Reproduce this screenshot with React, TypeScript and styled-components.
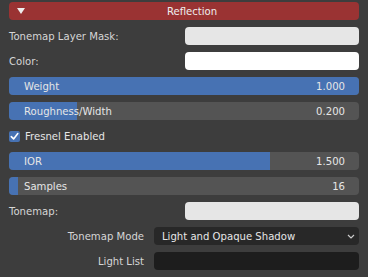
import styled, { createGlobalStyle } from "styled-components";

const GlobalStyle = createGlobalStyle`
    html, body {
        margin: 0;
        padding: 0;
        background: #3d3d3d;
        font-family: "DejaVu Sans", "Liberation Sans", sans-serif;
        font-size: 10.1px;
        color: #dddddd;
    }
`;

type Slider = { label: string; value: string; fill: number };

const topSliders: Slider[] = [
    { label: "Weight", value: "1.000", fill: 100 },
    { label: "Roughness/Width", value: "0.200", fill: 19.4 },
];

const bottomSliders: Slider[] = [
    { label: "IOR", value: "1.500", fill: 74.6 },
    { label: "Samples", value: "16", fill: 2.6 },
];

function SliderRow({ label, value, fill }: Slider) {
    return (
        <SliderBar>
            <SliderFill style={{ width: `${fill}%` }} />
            <SliderText>{label}</SliderText>
            <SliderText>{value}</SliderText>
        </SliderBar>
    );
}

export default function App() {
    return (
        <>
            <GlobalStyle />
            <Panel>
                <Header>
                    <Triangle />
                    <HeaderTitle>Reflection</HeaderTitle>
                </Header>
                <PropRow>
                    <Label>Tonemap Layer Mask:</Label>
                    <Swatch $color="#e6e6e6" />
                </PropRow>
                <PropRow>
                    <Label>Color:</Label>
                    <Swatch $color="#ffffff" />
                </PropRow>
                {topSliders.map((s) => (
                    <SliderRow key={s.label} {...s} />
                ))}
                <CheckRow>
                    <CheckBox>
                        <svg width="9" height="9" viewBox="0 0 9 9">
                            <path d="M1.3 4.6 L3.6 6.9 L7.8 1.6" fill="none" stroke="#ffffff" strokeWidth="1.6" strokeLinecap="round" strokeLinejoin="round" />
                        </svg>
                    </CheckBox>
                    <span>Fresnel Enabled</span>
                </CheckRow>
                {bottomSliders.map((s) => (
                    <SliderRow key={s.label} {...s} />
                ))}
                <PropRow>
                    <Label>Tonemap:</Label>
                    <Swatch $color="#e6e6e6" />
                </PropRow>
                <SplitRow>
                    <SplitLabel>Tonemap Mode</SplitLabel>
                    <Dropdown>
                        <span>Light and Opaque Shadow</span>
                        <svg width="8" height="5" viewBox="0 0 8 5">
                            <path d="M1 1 L4 4 L7 1" fill="none" stroke="#cccccc" strokeWidth="1.2" />
                        </svg>
                    </Dropdown>
                </SplitRow>
                <SplitRow>
                    <SplitLabel>Light List</SplitLabel>
                    <TextField />
                </SplitRow>
            </Panel>
        </>
    );
}

const Panel = styled.div`
    width: 350px;
    padding: 2px 9px 7px;
    display: flex;
    flex-direction: column;
    gap: 7px;
`;

const Header = styled.div`
    height: 18px;
    background: #9a3333;
    border-radius: 4px;
    display: flex;
    align-items: center;
    padding-left: 8px;
`;

const Triangle = styled.div`
    width: 0;
    height: 0;
    border-left: 4px solid transparent;
    border-right: 4px solid transparent;
    border-top: 6px solid #eeeeee;
`;

const HeaderTitle = styled.div`
    flex: 1;
    text-align: center;
    color: #eeeeee;
`;

const PropRow = styled.div`
    height: 18px;
    display: grid;
    grid-template-columns: 176px 1fr;
    align-items: center;
`;

const Label = styled.div`
    color: #d6d6d6;
`;

const Swatch = styled.div<{ $color: string }>`
    height: 18px;
    background: ${(p) => p.$color};
    border-radius: 4px;
`;

const SliderBar = styled.div`
    position: relative;
    height: 18px;
    background: #545454;
    border-radius: 4px;
    overflow: hidden;
    display: flex;
    align-items: center;
    justify-content: space-between;
    padding: 0 14px 0 15px;
`;

const SliderFill = styled.div`
    position: absolute;
    left: 0;
    top: 0;
    bottom: 0;
    background: #4772b3;
`;

const SliderText = styled.span`
    position: relative;
    color: #e6e6e6;
`;

const CheckRow = styled.div`
    height: 18px;
    display: flex;
    align-items: center;
    gap: 5px;
    color: #e6e6e6;
`;

const CheckBox = styled.div`
    width: 11px;
    height: 11px;
    border-radius: 2px;
    background: #4772b3;
    display: flex;
    align-items: center;
    justify-content: center;
`;

const SplitRow = styled.div`
    height: 18px;
    display: grid;
    grid-template-columns: 135px 1fr;
    column-gap: 10px;
    align-items: center;
`;

const SplitLabel = styled.div`
    text-align: right;
    color: #d6d6d6;
`;

const Dropdown = styled.div`
    height: 18px;
    background: #282828;
    border-radius: 4px;
    display: flex;
    align-items: center;
    justify-content: space-between;
    padding: 0 4px 0 8px;
    color: #e6e6e6;
`;

const TextField = styled.div`
    height: 18px;
    background: #1d1d1d;
    border-radius: 4px;
`;
